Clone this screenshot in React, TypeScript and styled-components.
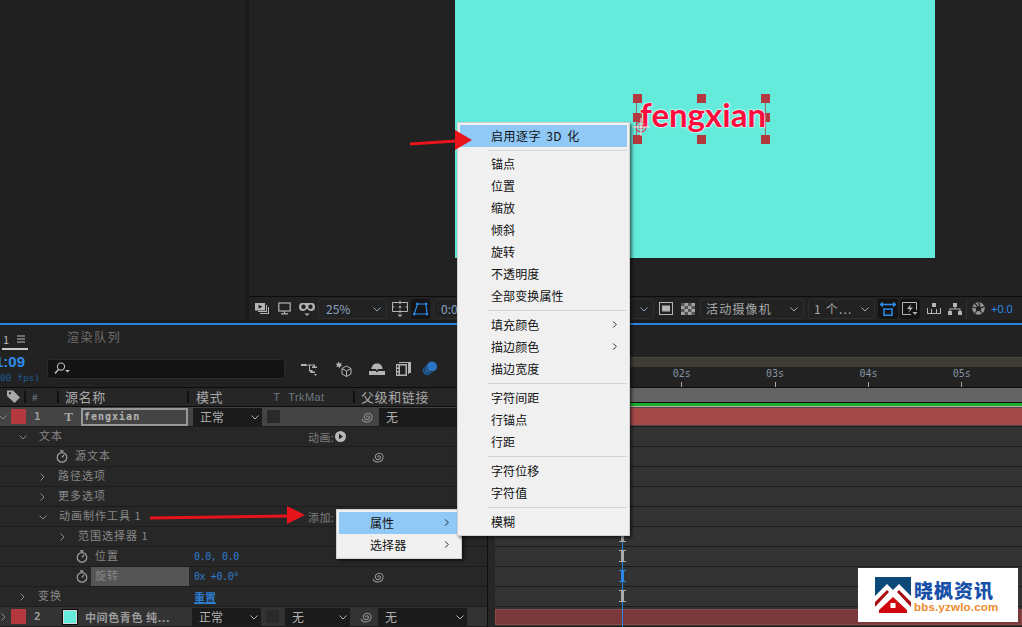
import React from "react";
import styled, { createGlobalStyle } from "styled-components";

const CJK = `"Noto Sans CJK SC", "Liberation Sans", sans-serif`;
const MONO = `"DejaVu Sans Mono", "Noto Sans CJK SC", monospace`;

const Global = createGlobalStyle`
  html, body { margin: 0; padding: 0; background: #222; }
  * { box-sizing: border-box; }
`;

const Page = styled.div`
  position: relative;
  width: 1022px;
  height: 627px;
  overflow: hidden;
  background: #1a1a1a;
  font-family: ${CJK};
  display: flex;
  flex-direction: column;
`;

/* ---------- top: viewer ---------- */
const Top = styled.div`
  height: 323px;
  display: flex;
  gap: 4px;
`;
const SidePanel = styled.div`
  width: 245px;
  height: 320px;
  background: #212121;
`;
const Viewer = styled.div`
  flex: 1;
  height: 320px;
  background: #222;
  display: flex;
  flex-direction: column;
`;
const Stage = styled.div`
  height: 297px;
  padding-left: 206px;
  border-bottom: 1px solid #0c0c0c;
`;
const Canvas = styled.div`
  position: relative;
  width: 480px;
  height: 258px;
  background: #65ebdc;
`;
const LayerText = styled.div`
  position: absolute;
  left: 185px;
  top: 92px;
  font-family: Lato, sans-serif;
  font-weight: 700;
  font-size: 33px;
  line-height: 44px;
  color: #ff0a3c;
  text-shadow: 0 0 2px #fff, 0 0 2px #fff, 0 0 1px #fff;
`;
const Handle = styled.i<{ $x: number; $y: number }>`
  position: absolute;
  left: ${(p) => p.$x}px;
  top: ${(p) => p.$y}px;
  width: 9px;
  height: 9px;
  background: #b23a3f;
`;
const BoundLine = styled.i<{ $x: number }>`
  position: absolute;
  left: ${(p) => p.$x}px;
  top: 98px;
  width: 1px;
  height: 40px;
  background: #9a6a6a;
`;
const AnchorMark = styled.svg`
  position: absolute;
  left: 177px;
  top: 118px;
`;

const ViewerBar = styled.div`
  height: 23px;
  display: flex;
  align-items: center;
  padding-left: 6px;
  color: #b4b4b4;
`;
const Tool = styled.div<{ $w: number; $ml?: number; $on?: boolean; $blue?: boolean }>`
  width: ${(p) => p.$w}px;
  height: 20px;
  margin-left: ${(p) => p.$ml ?? 0}px;
  flex: none;
  display: flex;
  align-items: center;
  justify-content: center;
  border-radius: 3px;
  background: ${(p) => (p.$on ? "#141414" : "transparent")};
  color: ${(p) => (p.$blue ? "#2d8ceb" : "#b4b4b4")};
`;
const ViewSelect = styled.div<{ $w: number; $ml?: number; $blue?: boolean }>`
  width: ${(p) => p.$w}px;
  height: 20px;
  margin-left: ${(p) => p.$ml ?? 0}px;
  flex: none;
  display: flex;
  align-items: center;
  justify-content: space-between;
  padding: 0 5px 0 ${(p) => (p.$blue ? 7 : 5)}px;
  border: 1px solid #2e2e2e;
  border-radius: 3px;
  font-size: 12px;
  letter-spacing: ${(p) => (p.$blue ? 0 : 1.2)}px;
  color: ${(p) => (p.$blue ? "#8aa4c0" : "#a8a8a8")};
`;
const BarSep = styled.i`
  width: 1px;
  height: 20px;
  margin-left: 4px;
  background: #333;
  flex: none;
`;
const Exposure = styled.span`
  margin-left: 6px;
  font-family: "Liberation Sans", sans-serif;
  font-size: 11px;
  color: #2d8ceb;
`;
const BlueLine = styled.div`
  height: 2px;
  background: #2a86e4;
  flex: none;
`;

/* ---------- bottom: timeline ---------- */
const Timeline = styled.div`
  flex: 1;
  display: flex;
  background: #222;
  min-height: 0;
`;
const LeftPane = styled.div`
  width: 488px;
  flex: none;
  display: flex;
  flex-direction: column;
  border-right: 1px solid #0e0e0e;
`;
const Tabs = styled.div`
  height: 25px;
  display: flex;
  align-items: flex-end;
  padding-left: 2px;
`;
const ActiveTab = styled.div`
  width: 26px;
  height: 20px;
  display: flex;
  align-items: center;
  gap: 8px;
  border-bottom: 2px solid #c8c8c8;
  font-size: 11px;
  color: #b8b8b8;
  padding-left: 1px;
`;
const QueueTab = styled.div`
  margin-left: 39px;
  height: 20px;
  font-size: 12px;
  line-height: 14px;
  letter-spacing: 1.6px;
  color: #6f6f6f;
`;
const CompBar = styled.div`
  height: 37px;
  display: flex;
  align-items: center;
  color: #b4b4b4;
`;
const TimeBox = styled.div`
  width: 47px;
  height: 32px;
  overflow: hidden;
`;
const TimeCode = styled.div`
  margin-left: -5px;
  font-family: "Liberation Sans", sans-serif;
  font-weight: 700;
  font-size: 15px;
  line-height: 18px;
  color: #2d8ceb;
`;
const Fps = styled.div`
  font-family: ${MONO};
  font-size: 9.5px;
  line-height: 14px;
  color: #1d5a96;
  white-space: nowrap;
`;
const Search = styled.div`
  width: 238px;
  height: 20px;
  flex: none;
  background: #131313;
  border: 1px solid #2b2b2b;
  border-radius: 3px;
  display: flex;
  align-items: center;
  padding-left: 6px;
  color: #bdbdbd;
`;
const HeaderRow = styled.div`
  height: 20px;
  display: flex;
  align-items: center;
  background: #262626;
  border-top: 1px solid #0c0c0c;
  border-bottom: 1px solid #0c0c0c;
  color: #a8a8a8;
`;
const HeadCell = styled.div<{ $w: number; $split?: boolean; $pad?: number; $dim?: boolean }>`
  width: ${(p) => p.$w}px;
  height: 12px;
  flex: none;
  display: flex;
  align-items: center;
  padding-left: ${(p) => p.$pad ?? 7}px;
  padding-bottom: 1px;
  border-right: ${(p) => (p.$split ? "2px solid #111" : "0")};
  font-size: ${(p) => (p.$dim ? 10 : 13)}px;
  letter-spacing: 0.6px;
  color: ${(p) => (p.$dim ? "#6d7680" : "#a8a8a8")};
  white-space: nowrap;
`;
const HeadHint = styled.span<{ $ml: number }>`
  margin-left: ${(p) => p.$ml}px;
  font-family: "Liberation Sans", sans-serif;
  font-size: 11px;
  letter-spacing: 0.4px;
  color: #6d7680;
`;

const LayerRow = styled.div<{ $bg: string }>`
  height: 20px;
  flex: none;
  display: flex;
  align-items: center;
  background: ${(p) => p.$bg};
  border-bottom: 1px solid #1c1c1c;
  color: #a2a2a2;
`;
const Twist = styled.div`
  width: 11px;
  margin-left: -1px;
  margin-right: 1px;
  flex: none;
  display: flex;
  color: #8a8a8a;
`;
const Label = styled.i`
  width: 15px;
  height: 15px;
  flex: none;
  background: #b4393f;
`;
const LayerNo = styled.div`
  width: 30px;
  flex: none;
  padding-left: 8px;
  font-family: ${MONO};
  font-weight: 700;
  font-size: 11px;
  color: #9a9a9a;
`;
const TypeGlyph = styled.div`
  width: 25px;
  flex: none;
  text-align: center;
  font-family: "Liberation Serif", serif;
  font-weight: 700;
  font-size: 13px;
  color: #a8a8a8;
`;
const NameBox = styled.div`
  width: 107px;
  height: 18px;
  margin-right: 5px;
  flex: none;
  border: 2px solid #989898;
  padding-left: 1px;
  font-family: ${MONO};
  font-weight: 700;
  font-size: 10px;
  line-height: 14px;
  letter-spacing: 1px;
  color: #b4b4b4;
`;
const Swatch = styled.i`
  width: 16px;
  height: 16px;
  margin-left: 6px;
  flex: none;
  background: #65ebdc;
  border: 1px solid #0c0c0c;
  outline: 1px solid #d8d8d8;
  outline-offset: -2px;
`;
const SourceName = styled.div`
  width: 107px;
  margin-left: 7px;
  flex: none;
  font-weight: 700;
  font-size: 11px;
  letter-spacing: 0.6px;
  color: #9c9c9c;
  white-space: nowrap;
`;
const Combo = styled.div<{ $w: number; $ml?: number }>`
  width: ${(p) => p.$w}px;
  height: 18px;
  margin-left: ${(p) => p.$ml ?? 0}px;
  flex: none;
  display: flex;
  align-items: center;
  justify-content: space-between;
  padding: 0 3px 0 7px;
  background: #1b1b1b;
  font-size: 12px;
  color: #b0b0b0;
`;
const MatteBox = styled.i`
  width: 13px;
  height: 13px;
  margin-left: 5px;
  flex: none;
  background: #2a2a2a;
`;
const Pick = styled.div<{ $ml?: number }>`
  width: 12px;
  margin-left: ${(p) => p.$ml ?? 0}px;
  flex: none;
  display: flex;
  color: #8f8f8f;
`;

const PropRow = styled.div`
  height: 20px;
  flex: none;
  display: grid;
  grid-template-columns: 192px 116px 64px 1fr;
  align-items: center;
  background: #272727;
  border-bottom: 1px solid #1c1c1c;
  font-size: 11px;
  letter-spacing: 1px;
  color: #878787;
`;
const PropName = styled.div<{ $indent: number }>`
  display: flex;
  align-items: center;
  height: 19px;
  padding-left: ${(p) => p.$indent}px;
  white-space: nowrap;
  line-height: 17px;
`;
const Fold = styled.div`
  width: 20px;
  flex: none;
  display: flex;
  color: #8a8a8a;
`;
const Watch = styled.div`
  width: 19px;
  flex: none;
  display: flex;
  color: #a0a0a0;
`;
const NameText = styled.span`
  margin-top: -2px;
`;
const Highlight = styled.span`
  width: 98px;
  height: 19px;
  margin-left: -4px;
  padding-left: 4px;
  line-height: 17px;
  background: #555;
`;
const Value = styled.div<{ $link?: boolean }>`
  padding-left: 2px;
  font-family: ${(p) => (p.$link ? CJK : MONO)};
  font-weight: ${(p) => (p.$link ? 700 : 400)};
  font-size: ${(p) => (p.$link ? 11 : 10)}px;
  letter-spacing: ${(p) => (p.$link ? 0 : -0.4)}px;
  color: #2d7dd2;
  text-decoration: ${(p) => (p.$link ? "underline" : "none")};
`;
const Action = styled.div`
  display: flex;
  align-items: center;
  gap: 1px;
  letter-spacing: 0.4px;
  color: #7f7f7f;
`;

const RightPane = styled.div`
  position: relative;
  flex: 1;
  display: flex;
  flex-direction: column;
  padding-left: 7px;
  background: #262626;
  min-width: 0;
`;
const Gutter = styled.div`
  height: 32px;
  margin-left: -7px;
  background: #222;
`;
const WorkBand = styled.div`
  height: 10px;
  margin-left: -7px;
  background: #3f3c33;
  border-top: 1px solid #4b483e;
`;
const Ruler = styled.div`
  height: 20px;
  margin-left: -7px;
  background: #222;
  display: flex;
  padding-left: 147px;
`;
const RulerMark = styled.div`
  width: 93.4px;
  flex: none;
  display: flex;
  flex-direction: column;
  align-items: center;
  font-family: ${MONO};
  font-size: 10px;
  line-height: 14px;
  color: #8494a4;
  &::after {
    content: "";
    width: 1px;
    height: 5px;
    margin-top: 1px;
    background: #a8a8a8;
  }
`;
const RangeBar = styled.div`
  height: 16px;
  margin-left: -7px;
  background: #646464;
  border-top: 1px solid #0c0c0c;
  border-bottom: 1px solid #0c0c0c;
`;
const GreenBar = styled.div`
  height: 3px;
  margin-left: -7px;
  background: #17b028;
`;
const Track = styled.div`
  height: 20px;
  flex: none;
  background: #333;
  border-bottom: 1px solid #1c1c1c;
`;
const FirstTrack = styled(Track)`
  height: 21px;
  margin-left: -7px;
  background: #4a4a4a;
  border-top: 1px solid #c9a8a8;
  padding-top: 1px;
`;
const HotBar = styled.div`
  height: 17px;
  background: #a54848;
`;
const LastTrack = styled(Track)`
  padding-top: 2px;
`;
const SoftBar = styled.div`
  height: 16px;
  background: #7a3a3b;
  border: 1px solid #8a4a4a;
`;
const Playhead = styled.i`
  position: absolute;
  left: 134px;
  top: 0;
  bottom: 0;
  width: 1px;
  background: #2a86e4;
`;
const Beam = styled.i<{ $y: number; $on?: boolean }>`
  position: absolute;
  left: 131px;
  top: ${(p) => p.$y}px;
  width: 7px;
  height: 12px;
  border-top: 1px solid ${(p) => (p.$on ? "#2a86e4" : "#a9a9a9")};
  border-bottom: 1px solid ${(p) => (p.$on ? "#2a86e4" : "#a9a9a9")};
  &::after {
    content: "";
    position: absolute;
    left: 2px;
    top: 0;
    bottom: 0;
    width: 3px;
    background: ${(p) => (p.$on ? "#2a86e4" : "#a9a9a9")};
  }
`;

/* ---------- context menus ---------- */
const Menu = styled.div<{ $x: number; $y: number; $w: number; $z: number }>`
  position: absolute;
  left: ${(p) => p.$x}px;
  top: ${(p) => p.$y}px;
  width: ${(p) => p.$w}px;
  z-index: ${(p) => p.$z};
  padding: 2px;
  background: #f0f0f0;
  border: 1px solid #d0d0d0;
  box-shadow: 2px 2px 3px rgba(0, 0, 0, 0.55);
`;
const MenuItem = styled.div<{ $hot?: boolean }>`
  height: 22px;
  display: flex;
  align-items: center;
  justify-content: space-between;
  padding: 0 9px 2px 31px;
  background: ${(p) => (p.$hot ? "#90c8f6" : "transparent")};
  font-size: 12px;
  letter-spacing: 0.1px;
  color: #111;
`;
const Spaced = styled.span`
  letter-spacing: 0.5px;
  word-spacing: 2px;
`;
const MenuRule = styled.div<{ $first?: boolean }>`
  height: ${(p) => (p.$first ? 6 : 7)}px;
  margin-left: 28px;
  display: flex;
  align-items: center;
  &::after {
    content: "";
    flex: 1;
    height: 1px;
    background: #d4d4d4;
  }
`;

const Arrows = styled.svg`
  position: absolute;
  left: 0;
  top: 0;
  z-index: 5;
  pointer-events: none;
`;

/* ---------- watermark ---------- */
const Mark = styled.div`
  position: absolute;
  left: 858px;
  top: 568px;
  width: 160px;
  height: 54px;
  z-index: 6;
  background: #fff;
  display: flex;
  align-items: center;
  padding-left: 17px;
  gap: 3px;
`;
const MarkText = styled.div`
  display: flex;
  flex-direction: column;
  padding-top: 3px;
`;
const MarkName = styled.div`
  font-weight: 900;
  font-size: 19px;
  line-height: 20px;
  letter-spacing: 1px;
  color: #1650a8;
`;
const MarkUrl = styled.div`
  margin-top: 2px;
  font-family: "Liberation Sans", sans-serif;
  font-weight: 700;
  font-size: 11.5px;
  line-height: 11px;
  letter-spacing: 0.2px;
  color: #ee8a2c;
`;

/* ---------- icons ---------- */
const Chevron = ({ open, size = 8 }: { open?: boolean; size?: number }) => (
  <svg width={size} height={size} viewBox="0 0 8 8" fill="none" stroke="currentColor" strokeWidth="1">
    <path d={open ? "M0.5 2.5 L4 6 L7.5 2.5" : "M2.5 0.5 L6 4 L2.5 7.5"} />
  </svg>
);
const Stopwatch = () => (
  <svg width="12" height="13" viewBox="0 0 12 13" fill="none" stroke="currentColor" strokeWidth="1.2">
    <circle cx="6" cy="7.4" r="4.8" />
    <path d="M4 0.8 H7.5 M6 1 V2.6 M6 7.4 L8 5" />
  </svg>
);
const Swirl = () => (
  <svg width="12" height="12" viewBox="0 0 12 12" fill="none" stroke="currentColor" strokeWidth="1.1">
    <path d="M6.2 6.3 C5.2 5.6 6.4 4.3 7.6 5 C9.2 6 8.3 8.6 6 8.6 C3.6 8.6 2.6 5.8 4 3.8 C5.6 1.6 9.6 1.6 10.8 4.4 C11.8 7.4 9.6 11 6 11 C3.4 11 1.6 9.6 1 8" />
  </svg>
);
const MonitorStack = () => (
  <svg width="14" height="13" viewBox="0 0 14 13" fill="currentColor">
    <rect x="0" y="1" width="10" height="7.5" />
    <path d="M3.5 2.8 L7.5 4.8 L3.5 6.8 Z" fill="#222" />
    <path d="M11 3 H12 V10 H3 V9 H11 Z M13 5 H14 V12 H5 V11 H13 Z" />
  </svg>
);
const Monitor = () => (
  <svg width="13" height="13" viewBox="0 0 13 13" fill="none" stroke="currentColor" strokeWidth="1.2">
    <rect x="0.8" y="1" width="11.4" height="8" />
    <path d="M6.5 9 V11.5 M3 11.8 H10" />
  </svg>
);
const Goggles = () => (
  <svg width="16" height="16" viewBox="0 0 16 16">
    <path d="M3 2 H13 C15 2 16 4 16 6 C16 9 14 10 12 10 C10 10 9 8 8 8 C7 8 6 10 4 10 C2 10 0 9 0 6 C0 4 1 2 3 2 Z" fill="currentColor" />
    <circle cx="4.5" cy="5.8" r="2.2" fill="#222" />
    <circle cx="11.5" cy="5.8" r="2.2" fill="#222" />
    <path d="M5.5 12.5 H10.5 L8 15 Z" fill="currentColor" />
  </svg>
);
const Grid = () => (
  <svg width="16" height="18" viewBox="0 0 16 18" fill="none" stroke="currentColor" strokeWidth="1">
    <path d="M0.5 2.5 H15.5 V11.5 H0.5 Z M8 5.5 V8.5 M6.5 7 H9.5 M8 0.5 V4 M8 10 V13 M0 7 H2.5 M13.5 7 H16" />
    <path d="M5.5 14.5 H10.5 L8 17 Z" fill="currentColor" stroke="none" />
  </svg>
);
const MaskIcon = () => (
  <svg width="15" height="14" viewBox="0 0 15 14" fill="none" stroke="currentColor" strokeWidth="1.2">
    <path d="M4.5 2 H13 L14 12 H1.2 Z" />
    <path d="M3.2 0.8 h2.2 v2.2 h-2.2 Z M12 0.8 h2.2 v2.2 h-2.2 Z M0 11 h2.2 v2.2 H0 Z M12.8 11 h2.2 v2.2 h-2.2 Z" fill="currentColor" stroke="none" />
  </svg>
);
const SafeRect = () => (
  <svg width="14" height="13" viewBox="0 0 14 13" fill="none" stroke="currentColor">
    <rect x="0.5" y="0.5" width="13" height="12" strokeWidth="1" />
    <rect x="3" y="3.5" width="8" height="6" fill="currentColor" stroke="none" />
  </svg>
);
const Checker = () => (
  <svg width="14" height="12" viewBox="0 0 14 12" fill="#555">
    <rect width="14" height="12" fill="#a2a2a2" />
    <path d="M0 0 h3.5 v3 H0 Z M7 0 h3.5 v3 H7 Z M3.5 3 H7 v3 H3.5 Z M10.5 3 H14 v3 h-3.5 Z M0 6 h3.5 v3 H0 Z M7 6 h3.5 v3 H7 Z M3.5 9 H7 v3 H3.5 Z M10.5 9 H14 v3 h-3.5 Z" />
  </svg>
);
const ViewLayout = () => (
  <svg width="16" height="14" viewBox="0 0 16 14" fill="none" stroke="currentColor" strokeWidth="1.5">
    <path d="M0 2.5 H16 M0.5 2.5 L3 0.5 M0.5 2.5 L3 4.5 M15.5 2.5 L13 0.5 M15.5 2.5 L13 4.5" />
    <rect x="4" y="7" width="8" height="6.2" />
  </svg>
);
const FastPreview = () => (
  <svg width="16" height="14" viewBox="0 0 16 14" fill="none" stroke="currentColor" strokeWidth="1">
    <path d="M9 12.5 H0.5 V0.5 H14.5 V8" />
    <path d="M9 2 L5 7 H8 L6 11 L11 5.5 H8 Z" fill="currentColor" stroke="none" />
    <path d="M10.5 10 H15.5 L13 13 Z" fill="currentColor" stroke="none" />
  </svg>
);
const FlowA = () => (
  <svg width="14" height="12" viewBox="0 0 14 12" fill="currentColor">
    <path d="M5 0 H9 V4 H5 Z M0 5 H1 V10 H4 V6 H5 V10 H9 V6 H10 V10 H13 V5 H14 V11 H0 Z" />
  </svg>
);
const FlowB = () => (
  <svg width="14" height="12" viewBox="0 0 14 12" fill="currentColor">
    <path d="M5 0 H9 V4 H7.5 V5.5 H12.5 V8 H14 V12 H10 V8 H11.5 V6.5 H2.5 V8 H4 V12 H0 V8 H1.5 V5.5 H6.5 V4 H5 Z" />
  </svg>
);
const Aperture = () => (
  <svg width="13" height="13" viewBox="0 0 13 13">
    <circle cx="6.5" cy="6.5" r="6.2" fill="#949494" />
    <circle cx="6.5" cy="6.5" r="2.6" fill="#222" />
    <path d="M6.5 0.5 L8 4.5 M12.2 4.5 L8.8 6 M10.5 11.3 L7.8 8.4 M3 11.5 L5 8.3 M0.6 5 L4.4 6 M3 1.5 L5.4 4.4" stroke="#222" strokeWidth="1.2" />
  </svg>
);
const SearchGlass = () => (
  <svg width="16" height="13" viewBox="0 0 16 13" fill="none" stroke="currentColor" strokeWidth="1.1">
    <circle cx="7" cy="4.6" r="3.6" />
    <path d="M4.4 7.4 L1 11.5" strokeWidth="1.5" />
    <path d="M11 8 H16 L13.5 10.4 Z" fill="currentColor" stroke="none" />
  </svg>
);
const CompFlow = () => (
  <svg width="17" height="14" viewBox="0 0 17 14" fill="currentColor">
    <path d="M0 2 H5 L7 3 L5 4 H0 Z M7 2.5 H14 V4.5 H16 V6 H11 V4.5 H12.5 V3.5 H9 V8 H11.5 V9.5 H14 V11 H9.5 V9.5 H8 V3.5 H7 Z" />
    <path d="M13 12 H16 L14.5 14 Z" />
  </svg>
);
const DraftCube = () => (
  <svg width="17" height="16" viewBox="0 0 17 16" fill="none" stroke="currentColor" strokeWidth="1">
    <path d="M11.5 5 L16 7.5 V13 L11.5 15.5 L7 13 V7.5 Z M7 7.5 L11.5 10 L16 7.5 M11.5 10 V15.5" />
    <path d="M3.5 0.5 L4.6 2.4 L6.8 1.6 L5.7 3.6 L7.5 5 L5.2 5.2 L4.6 7.4 L3.4 5.5 L1 6 L2.4 4.2 L0.5 2.8 L2.8 2.6 Z" fill="currentColor" stroke="none" />
  </svg>
);
const Shy = () => (
  <svg width="16" height="12" viewBox="0 0 16 12" fill="currentColor">
    <path d="M2.5 6 C2.5 2.5 5 0.5 8 0.5 C11 0.5 13.5 2.5 13.5 6 H8.6 V7.5 H7.4 V6 Z" />
    <path d="M0 8 H7 V9 H9 V8 H16 V12 H0 Z" />
  </svg>
);
const FrameBlend = () => (
  <svg width="15" height="14" viewBox="0 0 15 14" fill="currentColor">
    <path d="M3 0 H15 V11 H13 V12 H12 V1 H3 Z" />
    <path d="M0 2 H11 V14 H0 Z M1 3.5 V5.5 H2.5 V3.5 Z M1 7 V9 H2.5 V7 Z M1 10.5 V12.5 H2.5 V10.5 Z M4 3.5 V12.5 H9.5 V3.5 Z" fillRule="evenodd" />
  </svg>
);
const Motion = () => (
  <svg width="16" height="15" viewBox="0 0 16 15" stroke="#222" strokeWidth="0.8">
    <circle cx="5.5" cy="9.5" r="5" fill="#1c5da0" />
    <circle cx="7.5" cy="7.5" r="5" fill="#2268b4" />
    <circle cx="10" cy="5.5" r="5.4" fill="#2a74c8" />
  </svg>
);
const Tag = () => (
  <svg width="13" height="13" viewBox="0 0 13 13" fill="currentColor">
    <path d="M0 0.5 H6 L13 7.5 L7.5 13 L0 6 Z" />
    <circle cx="3" cy="3.2" r="1.1" fill="#262626" />
  </svg>
);
const PlayDot = () => (
  <svg width="11" height="11" viewBox="0 0 11 11">
    <circle cx="5.5" cy="5.5" r="5.5" fill="#b8b8b8" />
    <path d="M4 2.8 L8 5.5 L4 8.2 Z" fill="#222" />
  </svg>
);
const Burger = () => (
  <svg width="8" height="8" viewBox="0 0 8 8" stroke="currentColor" strokeWidth="1">
    <path d="M0 1 H8 M0 4 H8 M0 7 H8" />
  </svg>
);
const Logo = () => (
  <svg width="36" height="36" viewBox="0 0 36 36">
    <rect width="36" height="36" fill="#0b4a78" />
    <path d="M0 19 L12 7 L18 13 L24 7 L36 19 V36 H0 Z" fill="#fff" />
    <path d="M0 25 L12 13 L14 15 L0 30 Z M36 25 L24 13 L22 15 L36 30 Z" fill="#a80d10" />
    <path d="M18 16 L34 32 V36 H2 V32 Z" fill="#fff" />
    <path d="M18 20 L32 33 V36 H4 V33 Z" fill="#d0070e" />
    <rect x="15.5" y="26" width="5" height="5" fill="#fff" />
  </svg>
);

/* ---------- data ---------- */
const menuGroups: { label: string; more?: boolean }[][] = [
  [
    { label: "锚点" },
    { label: "位置" },
    { label: "缩放" },
    { label: "倾斜" },
    { label: "旋转" },
    { label: "不透明度" },
    { label: "全部变换属性" },
  ],
  [{ label: "填充颜色", more: true }, { label: "描边颜色", more: true }, { label: "描边宽度" }],
  [{ label: "字符间距" }, { label: "行锚点" }, { label: "行距" }],
  [{ label: "字符位移" }, { label: "字符值" }],
  [{ label: "模糊" }],
];

type Prop = {
  name: string;
  indent: number;
  fold?: "open" | "closed";
  watch?: boolean;
  hot?: boolean;
  value?: string;
  link?: boolean;
  action?: string;
  play?: boolean;
  pick?: boolean;
};

const propRows: Prop[] = [
  { name: "文本", indent: 19, fold: "open", action: "动画:", play: true },
  { name: "源文本", indent: 56, watch: true, pick: true },
  { name: "路径选项", indent: 38, fold: "closed" },
  { name: "更多选项", indent: 38, fold: "closed" },
  { name: "动画制作工具 1", indent: 39, fold: "open", action: "添加:" },
  { name: "范围选择器 1", indent: 58, fold: "closed" },
  { name: "位置", indent: 76, watch: true, value: "0.0, 0.0" },
  { name: "旋转", indent: 76, watch: true, hot: true, value: "0x +0.0°", pick: true },
  { name: "变换", indent: 18, fold: "closed", value: "重置", link: true },
];

const handleSpots = [178, 242, 306].flatMap((x) => [94, 113, 135].map((y) => ({ x, y })));

export default function App() {
  return (
    <Page>
      <Global />
      <Top>
        <SidePanel />
        <Viewer>
          <Stage>
            <Canvas>
              <BoundLine $x={181} />
              <BoundLine $x={310} />
              {handleSpots
                .filter((s) => !(s.x === 242 && s.y === 113))
                .map((s) => (
                  <Handle key={`${s.x}-${s.y}`} $x={s.x} $y={s.y} />
                ))}
              <LayerText>fengxian</LayerText>
              <AnchorMark width="18" height="18" viewBox="0 0 18 18" fill="none" stroke="#d8405a" strokeWidth="1.2">
                <circle cx="9" cy="9" r="5" />
                <circle cx="9" cy="9" r="2" />
                <path d="M0 9 H18 M9 0 V18" stroke="#f0e8e8" strokeWidth="1" />
              </AnchorMark>
            </Canvas>
          </Stage>
          <ViewerBar>
            <Tool $w={14}><MonitorStack /></Tool>
            <Tool $w={13} $ml={9}><Monitor /></Tool>
            <Tool $w={16} $ml={8}><Goggles /></Tool>
            <ViewSelect $w={69} $ml={3} $blue>25%<Chevron open /></ViewSelect>
            <Tool $w={16} $ml={5}><Grid /></Tool>
            <Tool $w={19} $ml={3} $on $blue><MaskIcon /></Tool>
            <ViewSelect $w={221} $ml={3} $blue>0:00<Chevron open /></ViewSelect>
            <Tool $w={14} $ml={5}><SafeRect /></Tool>
            <Tool $w={15} $ml={7}><Checker /></Tool>
            <ViewSelect $w={104} $ml={5}>活动摄像机<Chevron open /></ViewSelect>
            <ViewSelect $w={67} $ml={4}>1 个...<Chevron open /></ViewSelect>
            <Tool $w={20} $ml={3} $on $blue><ViewLayout /></Tool>
            <Tool $w={20} $ml={2} $on><FastPreview /></Tool>
            <Tool $w={16} $ml={6}><FlowA /></Tool>
            <Tool $w={15} $ml={5}><FlowB /></Tool>
            <BarSep />
            <Tool $w={13} $ml={5}><Aperture /></Tool>
            <Exposure>+0.0</Exposure>
          </ViewerBar>
        </Viewer>
      </Top>
      <BlueLine />
      <Timeline>
        <LeftPane>
          <Tabs>
            <ActiveTab>1<Burger /></ActiveTab>
            <QueueTab>渲染队列</QueueTab>
          </Tabs>
          <CompBar>
            <TimeBox>
              <TimeCode>1:09</TimeCode>
              <Fps>00 fps)</Fps>
            </TimeBox>
            <Search><SearchGlass /></Search>
            <Tool $w={17} $ml={16}><CompFlow /></Tool>
            <Tool $w={17} $ml={17}><DraftCube /></Tool>
            <Tool $w={16} $ml={17}><Shy /></Tool>
            <Tool $w={15} $ml={11}><FrameBlend /></Tool>
            <Tool $w={16} $ml={11}><Motion /></Tool>
          </CompBar>
          <HeaderRow>
            <HeadCell $w={26} $split $pad={7}><Tag /></HeadCell>
            <HeadCell $w={33} $split $pad={6} $dim>#</HeadCell>
            <HeadCell $w={130} $split $pad={6}>源名称</HeadCell>
            <HeadCell $w={166} $split $pad={7}>
              模式
              <HeadHint $ml={50}>T</HeadHint>
              <HeadHint $ml={8}>TrkMat</HeadHint>
            </HeadCell>
            <HeadCell $w={120} $pad={6}>父级和链接</HeadCell>
          </HeaderRow>
          <LayerRow $bg="#444">
            <Twist><Chevron open /></Twist>
            <Label />
            <LayerNo>1</LayerNo>
            <TypeGlyph>T</TypeGlyph>
            <NameBox>fengxian</NameBox>
            <Combo $w={69}>正常<Chevron open /></Combo>
            <MatteBox />
            <Pick $ml={81}><Swirl /></Pick>
            <Combo $w={90} $ml={6}>无</Combo>
          </LayerRow>
          {propRows.map((r) => (
            <PropRow key={r.name}>
              <PropName $indent={r.indent}>
                {r.fold && <Fold><Chevron open={r.fold === "open"} /></Fold>}
                {r.watch && <Watch><Stopwatch /></Watch>}
                {r.hot ? <Highlight>{r.name}</Highlight> : <NameText>{r.name}</NameText>}
              </PropName>
              <Value $link={r.link}>{r.value}</Value>
              <Action>
                {r.action}
                {r.play && <PlayDot />}
              </Action>
              {r.pick ? <Pick><Swirl /></Pick> : <span />}
            </PropRow>
          ))}
          <LayerRow $bg="#333">
            <Twist><Chevron /></Twist>
            <Label />
            <LayerNo>2</LayerNo>
            <Swatch />
            <SourceName>中间色青色 纯...</SourceName>
            <Combo $w={69}>正常<Chevron open /></Combo>
            <MatteBox />
            <Combo $w={65} $ml={6}>无<Chevron open /></Combo>
            <Pick $ml={10}><Swirl /></Pick>
            <Combo $w={89} $ml={6}>无<Chevron open /></Combo>
          </LayerRow>
        </LeftPane>
        <RightPane>
          <Gutter />
          <WorkBand />
          <Ruler>
            {["02s", "03s", "04s", "05s"].map((t) => (
              <RulerMark key={t}>{t}</RulerMark>
            ))}
          </Ruler>
          <RangeBar />
          <GreenBar />
          <FirstTrack><HotBar /></FirstTrack>
          {Array.from({ length: 9 }, (_, i) => (
            <Track key={i} />
          ))}
          <LastTrack><SoftBar /></LastTrack>
          <Playhead />
          <Beam $y={205} />
          <Beam $y={225} />
          <Beam $y={245} $on />
          <Beam $y={265} />
        </RightPane>
      </Timeline>

      <Menu $x={457} $y={122} $w={173} $z={4}>
        <MenuItem $hot><Spaced>启用逐字 3D 化</Spaced></MenuItem>
        {menuGroups.map((group, i) => (
          <React.Fragment key={i}>
            <MenuRule $first={i === 0} />
            {group.map((it) => (
              <MenuItem key={it.label}>
                {it.label}
                {it.more && <Chevron size={7} />}
              </MenuItem>
            ))}
          </React.Fragment>
        ))}
      </Menu>
      <Menu $x={336} $y={509} $w={126} $z={3}>
        <MenuItem $hot>属性<Chevron size={7} /></MenuItem>
        <MenuItem>选择器<Chevron size={7} /></MenuItem>
      </Menu>

      <Arrows width="1022" height="627" viewBox="0 0 1022 627">
        <path d="M410 144 L456 141 M150 518 L288 516" stroke="#e8141c" strokeWidth="3" />
        <path d="M455 130 L472 140 L455 150 Z M287 506 L305 515 L287 524 Z" fill="#e8141c" />
      </Arrows>

      <Mark>
        <Logo />
        <MarkText>
          <MarkName>晓枫资讯</MarkName>
          <MarkUrl>bbs.yzwlo.com</MarkUrl>
        </MarkText>
      </Mark>
    </Page>
  );
}
